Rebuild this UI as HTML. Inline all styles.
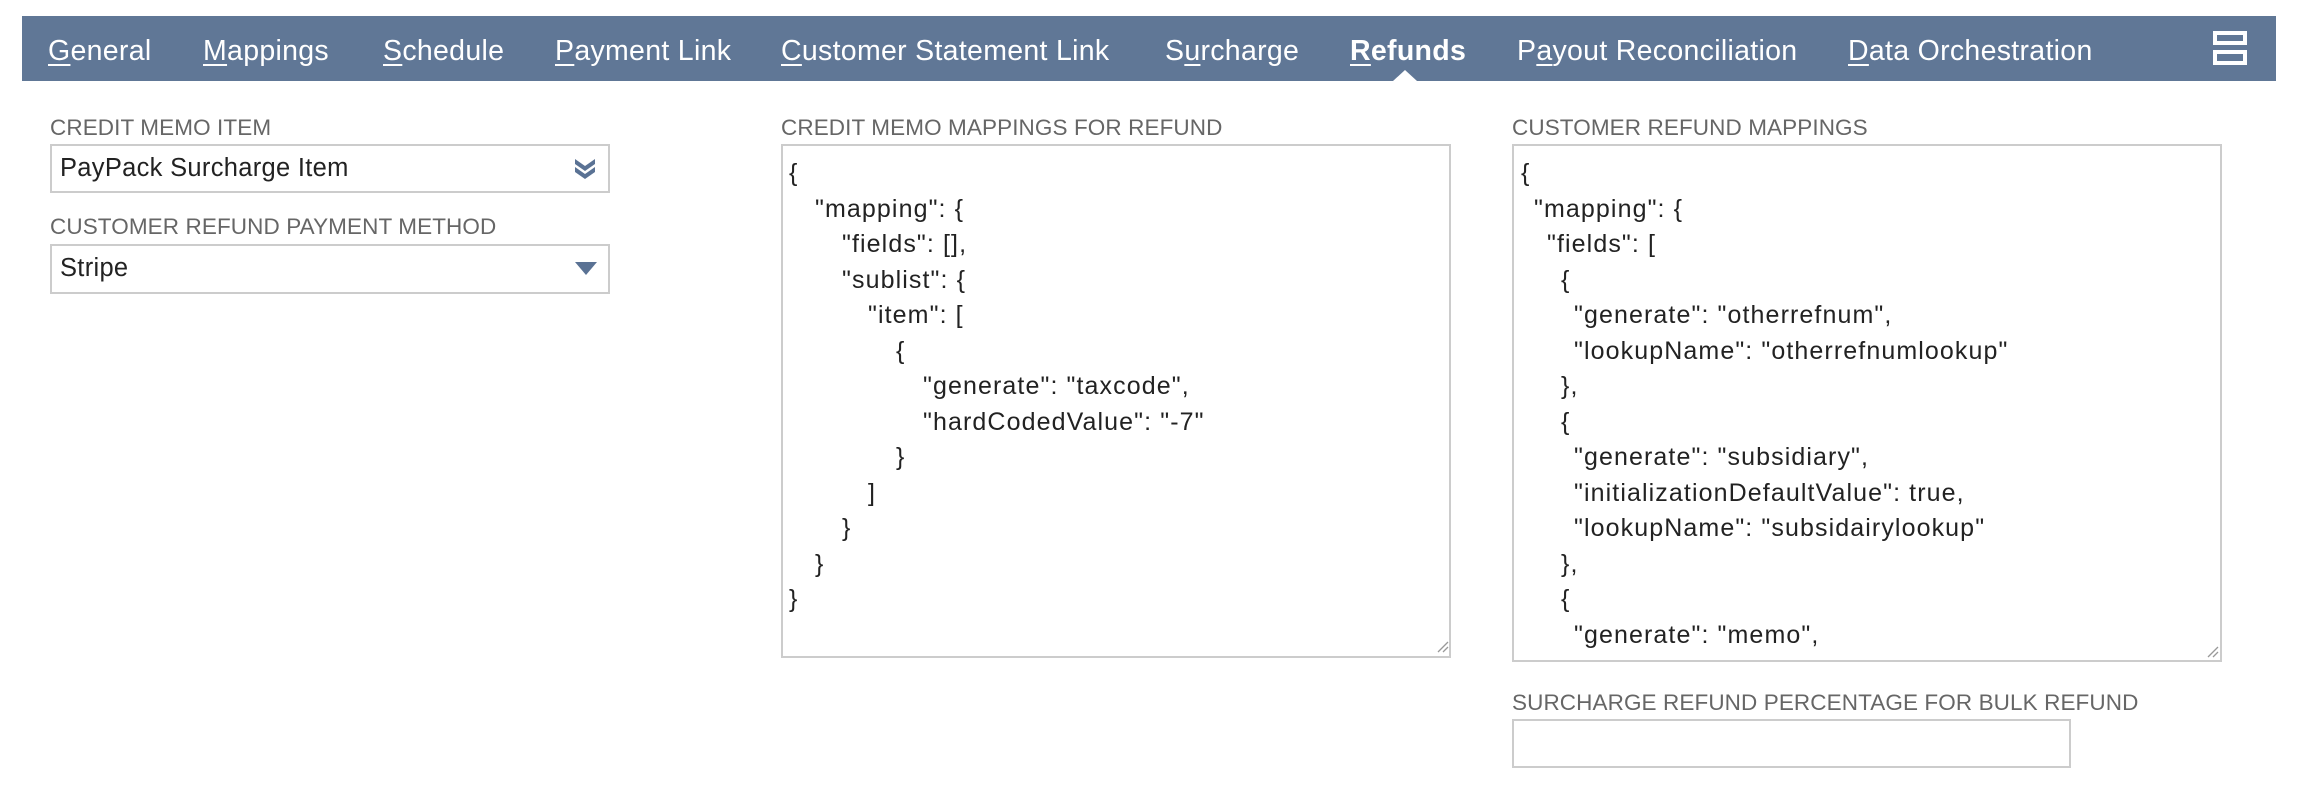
<!DOCTYPE html>
<html><head><meta charset="utf-8"><style>
body{margin:0;width:2304px;height:796px;background:#fff;position:relative;overflow:hidden;font-family:"Liberation Sans",sans-serif;}
.bar{position:absolute;left:22px;top:16px;width:2254px;height:65px;background:#607796;}
.tab{position:absolute;top:33px;color:#fff;font-size:28.5px;letter-spacing:0.3px;line-height:36px;white-space:nowrap;}
.tab u{text-decoration-thickness:2px;text-underline-offset:4px;}
.lbl{position:absolute;color:#666;font-size:22.5px;letter-spacing:0.1px;line-height:24px;white-space:nowrap;}
.box{position:absolute;border:2px solid #ccc;box-sizing:border-box;background:#fff;}
.sel{font-size:25.5px;letter-spacing:0.3px;color:#222;line-height:45px;padding-left:8px;}
.code{position:absolute;font-size:25px;letter-spacing:1.1px;line-height:35.5px;color:#222;}
.code div{height:35.5px;white-space:nowrap;}
</style></head><body>
<div class="bar"></div>
<div class="tab" style="left:48px"><u>G</u>eneral</div>
<div class="tab" style="left:203px"><u>M</u>appings</div>
<div class="tab" style="left:383px"><u>S</u>chedule</div>
<div class="tab" style="left:555px"><u>P</u>ayment Link</div>
<div class="tab" style="left:781px"><u>C</u>ustomer Statement Link</div>
<div class="tab" style="left:1165px">S<u>u</u>rcharge</div>
<div class="tab" style="left:1350px;font-weight:bold"><u>R</u>efunds</div>
<div class="tab" style="left:1517px">P<u>a</u>yout Reconciliation</div>
<div class="tab" style="left:1848px"><u>D</u>ata Orchestration</div>
<div style="position:absolute;left:1393px;top:70px;width:0;height:0;border-left:12px solid transparent;border-right:12px solid transparent;border-bottom:11px solid #fff"></div>
<div style="position:absolute;left:2213px;top:31px;width:34px;height:14px;border:4px solid #fff;box-sizing:border-box"></div>
<div style="position:absolute;left:2213px;top:50px;width:34px;height:15px;border:4px solid #fff;box-sizing:border-box"></div>

<div class="lbl" style="left:50px;top:116px">CREDIT MEMO ITEM</div>
<div class="box sel" style="left:50px;top:144px;width:560px;height:49px">PayPack Surcharge Item</div>
<svg style="position:absolute;left:572px;top:156px" width="26" height="26" viewBox="0 0 26 26"><path d="M3 3 L13 10 L23 3 L23 8 L13 15 L3 8Z M3 11 L13 18 L23 11 L23 16 L13 23 L3 16Z" fill="#5a7294"/></svg>
<div class="lbl" style="left:50px;top:215px">CUSTOMER REFUND PAYMENT METHOD</div>
<div class="box sel" style="left:50px;top:244px;width:560px;height:50px">Stripe</div>
<svg style="position:absolute;left:574px;top:260px" width="24" height="16" viewBox="0 0 24 16"><path d="M1 2 L23 2 L12 15Z" fill="#5a7294"/></svg>

<div class="lbl" style="left:781px;top:116px">CREDIT MEMO MAPPINGS FOR REFUND</div>
<div class="box" style="left:781px;top:144px;width:670px;height:514px"></div>
<div class="code" style="left:789px;top:156px"><div>{</div><div style="padding-left:26px">"mapping": {</div><div style="padding-left:53px">"fields": [],</div><div style="padding-left:53px">"sublist": {</div><div style="padding-left:79px">"item": [</div><div style="padding-left:107px">{</div><div style="padding-left:134px">"generate": "taxcode",</div><div style="padding-left:134px">"hardCodedValue": "-7"</div><div style="padding-left:107px">}</div><div style="padding-left:79px">]</div><div style="padding-left:53px">}</div><div style="padding-left:26px">}</div><div>}</div></div>
<div class="lbl" style="left:1512px;top:116px">CUSTOMER REFUND MAPPINGS</div>
<div class="box" style="left:1512px;top:144px;width:710px;height:518px"></div>
<div style="position:absolute;left:1514px;top:146px;width:700px;height:513px;overflow:hidden">
<div class="code" style="left:7px;top:10px"><div>{</div><div style="padding-left:13px">"mapping": {</div><div style="padding-left:26px">"fields": [</div><div style="padding-left:40px">{</div><div style="padding-left:53px">"generate": "otherrefnum",</div><div style="padding-left:53px">"lookupName": "otherrefnumlookup"</div><div style="padding-left:40px">},</div><div style="padding-left:40px">{</div><div style="padding-left:53px">"generate": "subsidiary",</div><div style="padding-left:53px">"initializationDefaultValue": true,</div><div style="padding-left:53px">"lookupName": "subsidairylookup"</div><div style="padding-left:40px">},</div><div style="padding-left:40px">{</div><div style="padding-left:53px">"generate": "memo",</div></div></div>
<svg style="position:absolute;left:1436px;top:640px" width="14" height="14"><path d="M2 12 L12 2 M7 12 L12 7" stroke="#999" stroke-width="1.3"/></svg>
<svg style="position:absolute;left:2206px;top:645px" width="14" height="14"><path d="M2 12 L12 2 M7 12 L12 7" stroke="#999" stroke-width="1.3"/></svg>

<div class="lbl" style="left:1512px;top:691px">SURCHARGE REFUND PERCENTAGE FOR BULK REFUND</div>
<div class="box" style="left:1512px;top:719px;width:559px;height:49px"></div>
</body></html>
